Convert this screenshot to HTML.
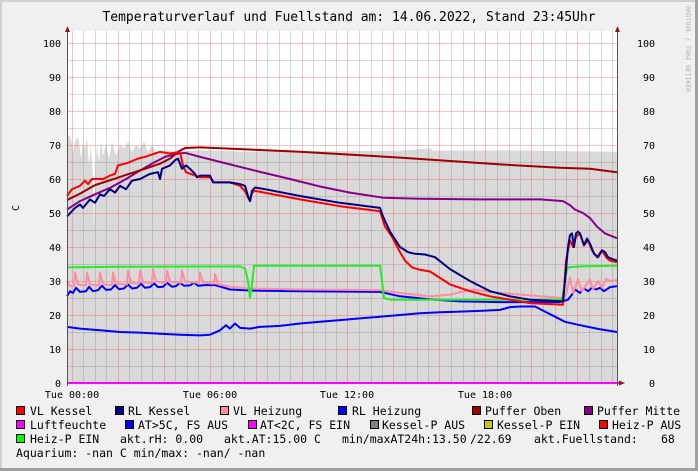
<!DOCTYPE html>
<html><head><meta charset="utf-8">
<style>
html,body{margin:0;padding:0;}
body{width:698px;height:471px;overflow:hidden;background:#f0f0f0;}
svg{display:block;}
text{font-family:"DejaVu Sans Mono","Liberation Mono",monospace;}
</style></head><body>
<svg width="698" height="471" viewBox="0 0 698 471" xmlns="http://www.w3.org/2000/svg">
<rect x="0" y="0" width="698" height="471" fill="#f0f0f0"/>
<rect x="0" y="0" width="698" height="2" fill="#d0d0d0"/>
<rect x="0" y="0" width="2" height="471" fill="#d0d0d0"/>
<rect x="0" y="468" width="698" height="3" fill="#a0a0a0"/>
<rect x="695" y="0" width="3" height="471" fill="#a0a0a0"/>
<text x="349" y="21" font-size="13" text-anchor="middle" fill="#000">Temperaturverlauf und Fuellstand am: 14.06.2022, Stand 23:45Uhr</text>
<text transform="translate(686,6) rotate(90)" font-size="6.5" fill="#b0b0b0">RRDTOOL / TOBI OETIKER</text>
<text transform="translate(19,208) rotate(-90)" font-size="10" text-anchor="middle" fill="#000">C</text>
<!-- plot bg -->
<rect x="67" y="31" width="550" height="352" fill="#fff"/>
<g transform="translate(0,383) scale(1,-3.4)">
<polygon fill="#d9d9d9" points="67,0 67,72 69,73 71,72 73,68 75,71 77,72.5 79,71 81,66 83,71 85,69 87,72 89,64 91,70 93,60 94,45 95,62 97,70 99,65 101,71 103,67 106,70 109,66 112,71 116,67 120,70 124,69 128,71 132,68 136,70 140,69 144,71 148,68 152,70 158,67 165,68.5 175,68 200,68.5 250,68 300,68.2 400,68.3 431,69 432,68.3 500,68.4 560,68.2 617,68 617,0"/>
</g>
<!-- grid -->
<g stroke="rgba(130,130,130,0.3)" stroke-width="1">
<path d="M67,366.5H617M67,332.5H617M67,298.5H617M67,264.5H617M67,230.5H617M67,196.5H617M67,162.5H617M67,128.5H617M67,94.5H617M67,60.5H617"/>
<path d="M83.5,31V383M95.5,31V383M106.5,31V383M129.5,31V383M141.5,31V383M152.5,31V383M175.5,31V383M187.5,31V383M198.5,31V383M221.5,31V383M233.5,31V383M244.5,31V383M267.5,31V383M279.5,31V383M290.5,31V383M313.5,31V383M325.5,31V383M336.5,31V383M359.5,31V383M371.5,31V383M382.5,31V383M405.5,31V383M417.5,31V383M428.5,31V383M451.5,31V383M463.5,31V383M474.5,31V383M497.5,31V383M509.5,31V383M520.5,31V383M543.5,31V383M555.5,31V383M566.5,31V383M589.5,31V383M601.5,31V383M612.5,31V383"/>
</g>
<g stroke="rgba(240,80,80,0.35)" stroke-width="1">
<path d="M67,349.5H617M67,315.5H617M67,281.5H617M67,247.5H617M67,213.5H617M67,179.5H617M67,145.5H617M67,111.5H617M67,77.5H617M67,43.5H617"/>
<path d="M72.5,31V383M118.5,31V383M164.5,31V383M210.5,31V383M256.5,31V383M302.5,31V383M347.5,31V383M393.5,31V383M439.5,31V383M485.5,31V383M531.5,31V383M577.5,31V383"/>
</g>
<g transform="translate(0,383) scale(1,-3.4)" fill="none" stroke-width="2" stroke-linejoin="round">
<polyline vector-effect="non-scaling-stroke" stroke="#0000ff" points="67,16.5 80,16 100,15.5 120,15 140,14.8 160,14.5 180,14.2 200,14 210,14.2 220,15.5 226,17 230,16 235,17.5 240,16.2 250,16 260,16.5 280,16.8 300,17.5 320,18 340,18.5 360,19 380,19.5 400,20 420,20.5 440,20.8 460,21 480,21.2 500,21.5 510,22.3 520,22.5 535,22.5 545,21 555,19.5 565,18 580,17 600,15.8 617,15"/>
<polyline vector-effect="non-scaling-stroke" stroke="#0000ff" points="67,25.5 70,27 73,26.5 76,28 80,26.8 86,27 89,28.3 93,27 98,27.3 102,28.6 106,27.4 111,27.5 115,28.8 119,27.6 124,27.8 128,29 132,27.8 137,28 141,29.2 145,28 150,28.2 154,29.3 158,28.2 163,28.3 167,29.5 172,28.3 176,28.5 180,29.5 184,28.6 190,28.7 194,29.5 198,28.6 205,28.8 215,28.8 230,27.5 250,27.2 300,27 380,26.8 400,25.5 430,24.6 460,24 500,23.8 560,23.8 568,24.5 572,26 575,27.5 580,26.5 584,27.8 588,27 592,28 596,27.5 600,28 604,27 610,28.2 617,28.5"/>
<polyline vector-effect="non-scaling-stroke" stroke="#ff8c9f" points="67,30 70,28.5 74,28.5 75,32.5 78,29 86,28.6 87,32.5 90,29 99,28.6 100,32.5 103,29 112,28.8 113,32.5 116,29.2 127,29 128,33 131,29.5 139,29.2 140,33 143,29.6 152,29.3 153,33.5 156,29.8 166,29.5 167,33 170,29.8 181,29.5 182,33 185,29.8 199,29.5 200,32.5 203,29.6 214,29.2 215,32 218,29 230,28.3 250,27.8 300,27.5 380,27.3 400,26.5 430,25.5 450,26 465,27 475,27.5 490,26.8 520,26 563,25 566,26 570,31 573,26.5 578,30.5 582,27 590,30.5 593,27.5 598,30 602,28 606,30.5 610,30 617,30.3"/>
<polyline vector-effect="non-scaling-stroke" stroke="#22ee22" points="67,34 120,34.2 240,34.3 245,33.7 248,30 250,25 252,29 254,34.5 380,34.5 382,30 384,25 390,24.5 562,24.5 564,28 566,32 568,34 580,34.3 617,34.5"/>
<polyline vector-effect="non-scaling-stroke" stroke="#880088" points="67,51 80,53.5 95,55.5 110,57.4 125,59.8 140,62.5 155,65 165,66.5 175,67.3 185,67.7 200,66.5 230,64.3 260,62.1 290,60 320,57.8 350,56 383,54.5 420,54.2 480,54 540,54 563,53.5 570,52.3 575,51 583,50 590,48.5 597,46 605,44 617,42.6"/>
<polyline vector-effect="non-scaling-stroke" stroke="#a00000" points="67,53.8 80,55.7 95,58.2 117,60.3 130,61.6 145,63 160,64.5 170,66 178,68 185,69.1 200,69.3 300,68 400,66.3 500,64.3 560,63.3 590,63 617,62"/>
<polyline vector-effect="non-scaling-stroke" stroke="#ff0000" points="67,55 72,57 76,57.5 80,58 85,59.5 88,58.5 92,60 97,60 103,60 110,61 115,61.5 118,64 125,64.5 130,65 138,66 145,66.5 150,67 155,67.5 160,68 170,67.5 180,68 183,64 186,62 195,61 200,60.5 210,60.5 214,59 230,59 240,58 246,56 248,54.5 250,53.5 252,56 255,56.5 300,54 340,52 380,50.5 385,46 392,43 400,38.5 405,36 412,34 420,33.3 430,32.8 450,29 470,27 490,25.5 510,24.5 530,23.5 563,23 566,36 570,42 573,40 576,43 580,44 584,40.5 588,42 592,39 597,37 602,39 606,37 610,36 617,35.5"/>
<polyline vector-effect="non-scaling-stroke" stroke="#000080" points="67,49 75,51.5 80,52.5 83,51.5 90,54 95,53 100,55.5 104,55 110,57 115,56 120,58 126,57 132,59.5 140,60 150,61.5 158,62 160,60 162,63 170,64 175,65.5 178,66 182,63 186,64 190,63 195,61.5 197,60.5 200,61 210,61 213,59 230,59 240,58.5 245,58 248,55 250,53.5 252,56.5 255,57.5 265,57 300,55 340,53 380,51.5 383,49 390,44.5 400,40 408,38.5 415,38 425,37.8 435,37 450,33.5 470,30 490,27 510,25.5 530,24.5 563,24 565,30 568,40 570,43.5 572,44 574,40 576,44 578,44.5 580,44 584,40.5 587,42.5 590,41 594,38 598,37 602,39 605,38.5 608,37 612,36.5 617,36"/>
</g>
<!-- axes -->
<line x1="67" y1="383" x2="620" y2="383" stroke="#ff00ff" stroke-width="2"/>
<line x1="67.5" y1="30" x2="67.5" y2="386" stroke="#555" stroke-width="1"/>
<line x1="617.5" y1="30" x2="617.5" y2="386" stroke="#555" stroke-width="1"/>
<polygon points="67.5,26 65,32 70,32" fill="#8b1a1a"/>
<polygon points="617.5,26 615,32 620,32" fill="#8b1a1a"/>
<polygon points="625,383 619,380.5 619,385.5" fill="#8b1a1a"/>
<g font-size="10" fill="#000">
<g text-anchor="end">
<text x="61" y="47">100</text><text x="61" y="81">90</text><text x="61" y="115">80</text><text x="61" y="149">70</text><text x="61" y="183">60</text><text x="61" y="217">50</text><text x="61" y="251">40</text><text x="61" y="285">30</text><text x="61" y="319">20</text><text x="61" y="353">10</text><text x="61" y="387">0</text>
<text x="655" y="47">100</text><text x="655" y="81">90</text><text x="655" y="115">80</text><text x="655" y="149">70</text><text x="655" y="183">60</text><text x="655" y="217">50</text><text x="655" y="251">40</text><text x="655" y="285">30</text><text x="655" y="319">20</text><text x="655" y="353">10</text><text x="655" y="387">0</text>
</g>
<g text-anchor="middle">
<text x="72" y="398">Tue 00:00</text><text x="210" y="398">Tue 06:00</text><text x="347" y="398">Tue 12:00</text><text x="485" y="398">Tue 18:00</text>
</g>
</g>
<!-- legend -->
<g stroke="#000" stroke-width="1">
<rect x="16.5" y="406.5" width="8" height="8" fill="#ff0000"/>
<rect x="115.5" y="406.5" width="8" height="8" fill="#000080"/>
<rect x="220.5" y="406.5" width="8" height="8" fill="#ff8c9f"/>
<rect x="338.5" y="406.5" width="8" height="8" fill="#0000ff"/>
<rect x="472.5" y="406.5" width="8" height="8" fill="#a00000"/>
<rect x="584.5" y="406.5" width="8" height="8" fill="#880088"/>
<rect x="16.5" y="420.5" width="8" height="8" fill="#ff00ff"/>
<rect x="125.5" y="420.5" width="8" height="8" fill="#0000ff"/>
<rect x="248.5" y="420.5" width="8" height="8" fill="#ff00ff"/>
<rect x="370.5" y="420.5" width="8" height="8" fill="#808080"/>
<rect x="484.5" y="420.5" width="8" height="8" fill="#c8c800"/>
<rect x="599.5" y="420.5" width="8" height="8" fill="#ff0000"/>
<rect x="16.5" y="434.5" width="8" height="8" fill="#00ff00"/>
</g>
<g font-size="11.5" fill="#000">
<text x="30" y="415">VL Kessel</text>
<text x="128" y="415">RL Kessel</text>
<text x="233" y="415">VL Heizung</text>
<text x="352" y="415">RL Heizung</text>
<text x="485" y="415">Puffer Oben</text>
<text x="597" y="415">Puffer Mitte</text>
<text x="30" y="429">Luftfeuchte</text>
<text x="138" y="429">AT&gt;5C, FS AUS</text>
<text x="260" y="429">AT&lt;2C, FS EIN</text>
<text x="382" y="429">Kessel-P AUS</text>
<text x="497" y="429">Kessel-P EIN</text>
<text x="612" y="429">Heiz-P AUS</text>
<text x="30" y="443">Heiz-P EIN</text>
<text x="120" y="443">akt.rH: 0.00</text>
<text x="224" y="443">akt.AT:15.00 C</text>
<text x="342" y="443">min/maxAT24h:13.50</text>
<text x="470" y="443">/22.69</text>
<text x="534" y="443">akt.Fuellstand:</text>
<text x="661" y="443">68</text>
<text x="16" y="457">Aquarium: -nan C  min/max: -nan/ -nan</text>
</g>
</svg>
</body></html>
